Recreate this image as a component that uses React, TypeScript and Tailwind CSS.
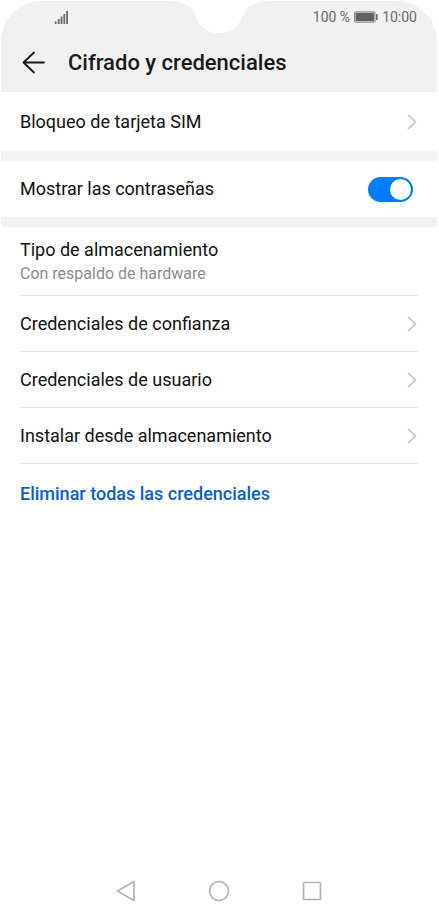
import { useState } from "react";

function Chevron() {
  return (
    <svg aria-hidden="true" className="h-4 w-3 shrink-0" viewBox="0 0 12 16" fill="none" stroke="#c8c8c8" strokeWidth="1.7">
      <path d="M2 0.8 9.4 8 2 15.2" />
    </svg>
  );
}

function Row({ label, className }: { label: string; className: string }) {
  return (
    <button type="button" className={`flex w-full items-center justify-between pr-px text-left ${className}`}>
      <span>{label}</span>
      <Chevron />
    </button>
  );
}

function StatusBar() {
  return (
    <div className="relative flex h-8 items-center justify-between pr-5 pl-[53px] text-sm text-[#6b6b6b]">
      <svg aria-hidden="true" className="absolute top-0 left-1/2 h-8 w-[100px] -translate-x-1/2" viewBox="0 0 100 32">
        <path
          d="M0 0H100C86 0 77 5 73.500 15C69.500 26 63 32 50 32S30.500 26 26.500 15C23 5 14 0 0 0Z"
          fill="#ffffff"
        />
      </svg>
      <svg aria-label="Señal" role="img" className="h-[13px] w-[15px]" viewBox="0 0 15 13" fill="#6b6b6b">
        <rect x="0.800" y="10.500" width="1.800" height="2.500" />
        <rect x="3.800" y="8" width="1.800" height="5" />
        <rect x="6.600" y="5.500" width="1.800" height="7.500" />
        <rect x="9.400" y="3" width="1.800" height="10" />
        <rect x="12.200" y="0" width="1.800" height="13" />
      </svg>
      <div className="flex items-center gap-1">
        <span>100 %</span>
        <svg aria-label="Batería" role="img" className="h-3 w-6" viewBox="0 0 24 12">
          <rect x="0.500" y="0.800" width="20.500" height="10.400" rx="1" fill="#d8d8d8" stroke="#8c8c8c" />
          <rect x="1.600" y="1.900" width="18.300" height="8.200" fill="#606060" />
          <rect x="22" y="3" width="1.700" height="6" fill="#6b6b6b" />
        </svg>
        <span>10:00</span>
      </div>
    </div>
  );
}

export default function App() {
  const [showPasswords, setShowPasswords] = useState(true);

  return (
    <div className="flex min-h-screen flex-col bg-white pt-px pr-0.5 pl-px font-['Roboto',sans-serif] text-lg leading-6 text-[#111111]">
      <header className="rounded-t-[40px] bg-[#f1f1f1]">
        <StatusBar />
        <div className="flex h-[59px] items-center gap-[23px] px-[21px]">
          <button type="button" aria-label="Atrás">
            <svg aria-hidden="true" className="h-6 w-[23px]" viewBox="0 0 23 24" fill="none" stroke="#1a1a1a" strokeWidth="1.800" strokeLinecap="round" strokeLinejoin="round">
              <path d="M22 11.500H1.500M12 1.500 1.500 11.500 12 21.500" />
            </svg>
          </button>
          <h1 className="text-[22px] leading-7 font-medium text-[#1a1a1a]">Cifrado y credenciales</h1>
        </div>
      </header>

      <main className="flex-1">
        <section className="mr-[18px] ml-[19px]">
          <Row label="Bloqueo de tarjeta SIM" className="h-[59px]" />
        </section>
        <div className="h-[10px] bg-[#f3f3f3]" />
        <label className="flex h-14 items-center justify-between pr-6 pl-[19px]">
          <span>Mostrar las contraseñas</span>
          <input
            type="checkbox"
            role="switch"
            checked={showPasswords}
            onChange={(event) => setShowPasswords(event.target.checked)}
            className="flex h-[25px] w-[45px] appearance-none items-center rounded-full bg-[#c4c4c4] px-[2px] before:size-[21px] before:rounded-full before:bg-white checked:justify-end checked:bg-[#007dff]"
          />
        </label>
        <div className="h-[10px] bg-[#f3f3f3]" />
        <section className="mr-[18px] ml-[19px] divide-y divide-[#e5e5e5]">
          <div className="flex h-[69px] flex-col justify-center pt-0.5">
            <p>Tipo de almacenamiento</p>
            <p className="text-base leading-6 text-[#8c8c8c]">Con respaldo de hardware</p>
          </div>
          <Row label="Credenciales de confianza" className="h-14" />
          <Row label="Credenciales de usuario" className="h-14" />
          <Row label="Instalar desde almacenamiento" className="h-14" />
          <button type="button" className="flex h-[60px] w-full items-center text-left font-medium text-[#0a5fc4]">
            Eliminar todas las credenciales
          </button>
        </section>
      </main>

      <nav className="flex h-[46px] items-center justify-center gap-[69px] text-[#b3b3b3]">
        <button type="button" aria-label="Volver">
          <svg aria-hidden="true" className="size-6" viewBox="0 0 24 24" fill="none" stroke="currentColor" strokeWidth="1.700" strokeLinejoin="round">
            <path d="M20 2.500V21.500L3.500 12Z" />
          </svg>
        </button>
        <button type="button" aria-label="Inicio">
          <svg aria-hidden="true" className="size-6" viewBox="0 0 24 24" fill="none" stroke="currentColor" strokeWidth="1.700">
            <circle cx="12" cy="12" r="9.500" />
          </svg>
        </button>
        <button type="button" aria-label="Recientes">
          <svg aria-hidden="true" className="size-6" viewBox="0 0 24 24" fill="none" stroke="currentColor" strokeWidth="1.700">
            <rect x="3.500" y="3.500" width="17" height="17" rx="0.500" />
          </svg>
        </button>
      </nav>
    </div>
  );
}
